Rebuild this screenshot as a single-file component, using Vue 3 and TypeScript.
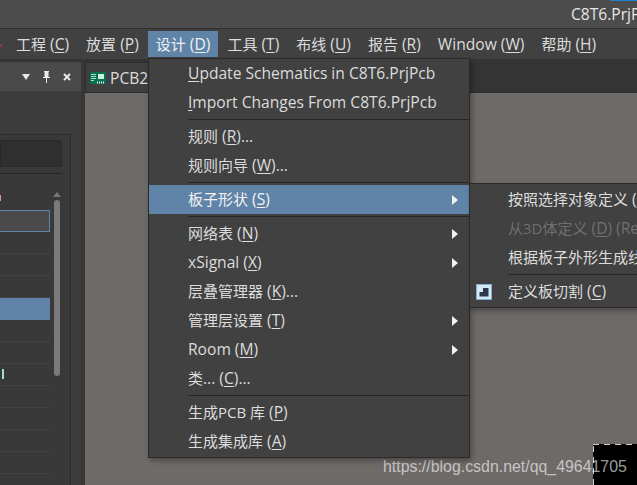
<script setup lang="ts">
interface Entry {
  cjk?: string
  lead?: string
  key?: string
  after?: string
  arrow?: boolean
  active?: boolean
  disabled?: boolean
  icon?: boolean
  sep?: boolean
}

const topMenus: Entry[] = [
  { cjk: '工程', lead: ' (', key: 'C', after: ')' },
  { cjk: '放置', lead: ' (', key: 'P', after: ')' },
  { cjk: '设计', lead: ' (', key: 'D', after: ')', active: true },
  { cjk: '工具', lead: ' (', key: 'T', after: ')' },
  { cjk: '布线', lead: ' (', key: 'U', after: ')' },
  { cjk: '报告', lead: ' (', key: 'R', after: ')' },
  { lead: 'Window (', key: 'W', after: ')' },
  { cjk: '帮助', lead: ' (', key: 'H', after: ')' },
]

const designMenu: Entry[] = [
  { key: 'U', after: 'pdate Schematics in C8T6.PrjPcb' },
  { key: 'I', after: 'mport Changes From C8T6.PrjPcb' },
  { sep: true },
  { cjk: '规则', lead: ' (', key: 'R', after: ')...' },
  { cjk: '规则向导', lead: ' (', key: 'W', after: ')...' },
  { sep: true },
  { cjk: '板子形状', lead: ' (', key: 'S', after: ')', arrow: true, active: true },
  { sep: true },
  { cjk: '网络表', lead: ' (', key: 'N', after: ')', arrow: true },
  { lead: 'xSignal (', key: 'X', after: ')', arrow: true },
  { cjk: '层叠管理器', lead: ' (', key: 'K', after: ')...' },
  { cjk: '管理层设置', lead: ' (', key: 'T', after: ')', arrow: true },
  { lead: 'Room (', key: 'M', after: ')', arrow: true },
  { cjk: '类', lead: '... (', key: 'C', after: ')...' },
  { sep: true },
  { cjk: '生成PCB 库', lead: ' (', key: 'P', after: ')' },
  { cjk: '生成集成库', lead: ' (', key: 'A', after: ')' },
]

const shapeMenu: Entry[] = [
  { cjk: '按照选择对象定义', lead: ' (', key: 'D', after: ')' },
  { cjk: '从3D体定义', lead: ' (', key: 'D', after: ') (Requires 3D mode)', disabled: true },
  { cjk: '根据板子外形生成线条', lead: ' (', key: 'L', after: ')' },
  { sep: true },
  { cjk: '定义板切割', lead: ' (', key: 'C', after: ')', icon: true },
]

const panelRows = ['selected', '', '', '', 'active', '', '', 'green', '', '', '', '']
</script>

<template>
  <div class="app">
    <header class="titlebar">
      <span class="titlebar__accent" />
      <span class="lat">C8T6.PrjPcb</span>
    </header>

    <nav class="menubar">
      <span class="menubar__speck" />
      <span
        v-for="menu in topMenus"
        :key="menu.key"
        class="menubar__item"
        :class="{ 'menubar__item--active': menu.active }"
      >{{ menu.cjk }}<span class="lat">{{ menu.lead }}<u>{{ menu.key }}</u>{{ menu.after }}</span></span>
    </nav>

    <div class="workspace">
      <aside class="panel">
        <div class="panel__head">
          <svg class="panel__tool" width="10" height="10" viewBox="0 0 10 10"><path d="M0 2h8L4 8z" fill="#e8e8e8" /></svg>
          <svg class="panel__tool" width="10" height="12" viewBox="0 0 10 12"><path d="M2 0h5v1h-.5v5H8v1H5v5H4V7H1V6h1.500V1H2z" fill="#eee" /></svg>
          <svg class="panel__tool" width="10" height="10" viewBox="0 0 10 10"><path d="M2 2l6 6M8 2L2 8" stroke="#e8e8e8" stroke-width="2" /></svg>
        </div>
        <div class="panel__body">
          <div class="frame">
            <div class="frame__search" />
            <div class="frame__rule" />
            <div class="frame__list">
              <div class="rows">
                <span class="rows__tick" />
                <div
                  v-for="(row, i) in panelRows"
                  :key="i"
                  class="rows__row"
                  :class="row && `rows__row--${row}`"
                />
              </div>
              <div class="scroll">
                <svg width="8" height="5" viewBox="0 0 8 5"><path d="M0 5h8L4 0z" fill="#777" /></svg>
                <div class="scroll__thumb" />
              </div>
            </div>
          </div>
        </div>
      </aside>

      <main class="editor">
        <div class="tabs">
          <div class="tab">
            <svg width="16" height="12" viewBox="0 0 16 12">
              <rect width="16" height="12" fill="#0b7050" />
              <path d="M1 2.500h5M1 4.500h5M1 6.500h5M1 8.500h3" stroke="#a9e0c8" stroke-width="1" />
              <rect x="8" y="2" width="6" height="5" fill="#cfeee0" />
              <path d="M7 10.500h8" stroke="#f0f0f0" stroke-width="2" stroke-dasharray="1 1" />
            </svg>
            <span class="lat">PCB2.PcbDoc</span>
          </div>
        </div>
        <div class="canvas">
          <div class="origin" />
          <span class="watermark">https://blog.csdn.net/qq_49641705</span>
        </div>
      </main>
    </div>

    <div class="menu menu--design">
      <template v-for="(entry, i) in designMenu" :key="i">
        <div v-if="entry.sep" class="menu__sep" />
        <div v-else class="menu__item" :class="{ 'menu__item--active': entry.active }">
          <span>{{ entry.cjk }}<span class="lat">{{ entry.lead }}<u>{{ entry.key }}</u>{{ entry.after }}</span></span>
          <svg v-if="entry.arrow" class="menu__arrow" width="6" height="10" viewBox="0 0 6 10"><path d="M0 0l6 5-6 5z" fill="#f2f2f2" /></svg>
        </div>
      </template>
    </div>

    <div class="menu menu--shape">
      <template v-for="(entry, i) in shapeMenu" :key="i">
        <div v-if="entry.sep" class="menu__sep" />
        <div v-else class="menu__item" :class="{ 'menu__item--disabled': entry.disabled }">
          <svg v-if="entry.icon" class="menu__icon" width="16" height="16" viewBox="0 0 16 16">
            <rect x="0.500" y="0.500" width="15" height="15" fill="#d8e9f6" stroke="#7fb0d8" />
            <path d="M3.500 8H7V4h5.500v8.500h-9z" fill="#2b3a48" />
          </svg>
          <span>{{ entry.cjk }}<span class="lat">{{ entry.lead }}<u>{{ entry.key }}</u>{{ entry.after }}</span></span>
        </div>
      </template>
    </div>
  </div>
</template>

<style>
html,
body {
  margin: 0;
  background: #4a4a4a;
}
</style>

<style scoped>
.app {
  position: relative;
  width: 637px;
  height: 485px;
  overflow: hidden;
  display: flex;
  flex-direction: column;
  background: #343434;
  font-family: "Open Sans", "Noto Sans CJK SC", sans-serif;
  font-size: 15px;
  color: #dcdcdc;
}
.lat {
  font-size: 15.6px;
  white-space: pre;
}
u {
  text-underline-offset: 2px;
  text-decoration-thickness: 1px;
}

.titlebar {
  position: relative;
  height: 28px;
  flex: none;
  display: flex;
  align-items: center;
  padding-left: 571px;
  background: #4c4c4c;
  border-bottom: 1px solid #2e2e2e;
  white-space: nowrap;
  color: #e6e6e6;
}
.titlebar__accent {
  position: absolute;
  top: 0;
  right: 0;
  width: 27px;
  height: 1px;
  background: #1f7fd0;
}

.menubar {
  position: relative;
  height: 30px;
  flex: none;
  display: flex;
  align-items: center;
  gap: 1px;
  padding-left: 8px;
  background: #414141;
  white-space: nowrap;
}
.menubar__speck {
  position: absolute;
  left: 0;
  top: 15px;
  width: 2px;
  height: 3px;
  background: #8a3c3c;
}
.menubar__item {
  height: 26px;
  line-height: 26px;
  padding: 0 8px;
}
.menubar__item--active {
  background: #5f84a8;
  color: #f0f0f0;
}

.workspace {
  flex: 1;
  min-height: 0;
  display: flex;
  gap: 4px;
  background: #383838;
}

.panel {
  width: 81px;
  flex: none;
  display: flex;
  flex-direction: column;
  padding-top: 3px;
  background: #343434;
}
.panel__head {
  height: 29px;
  flex: none;
  display: flex;
  align-items: center;
  justify-content: flex-end;
  gap: 10px;
  padding-right: 9px;
  background: #4a4a4a;
}
.panel__body {
  flex: 1;
  min-height: 0;
  padding: 43px 10px 0 0;
  background: #3c3c3c;
}
.frame {
  height: 100%;
  box-sizing: border-box;
  display: flex;
  flex-direction: column;
  padding: 5px 8px 0 0;
  border: 1px solid #2a2a2a;
  border-width: 1px 1px 0 0;
  background: #393939;
}
.frame__search {
  height: 27px;
  flex: none;
  box-sizing: border-box;
  background: #2f2f2f;
  border: 1px solid #292929;
  border-radius: 0 3px 3px 0;
}
.frame__rule {
  height: 1px;
  margin-top: 6px;
  flex: none;
  background: #262626;
}
.frame__list {
  flex: 1;
  display: flex;
  gap: 4px;
  padding: 15px 2px 0 0;
  min-height: 0;
}
.rows {
  position: relative;
  flex: 1;
  padding-top: 21px;
}
.rows__tick {
  position: absolute;
  left: 0;
  top: 6px;
  width: 1px;
  height: 6px;
  background: #d09a8a;
}
.rows__row {
  height: 22px;
  box-sizing: border-box;
  border-bottom: 1px solid #424242;
}
.rows__row--selected {
  background: #4a4a4a;
  border: 1px solid #5f84a8;
  border-left: 0;
}
.rows__row--active {
  background: #5f84a8;
  border: 0;
}
.rows__row--green {
  background: linear-gradient(#9fe0c0, #9fe0c0) no-repeat 2px 5px / 2px 10px;
}
.scroll {
  width: 6px;
  flex: none;
  display: flex;
  flex-direction: column;
  align-items: center;
  gap: 3px;
  margin-top: 3px;
}
.scroll svg {
  flex: none;
}
.scroll__thumb {
  width: 6px;
  height: 176px;
  flex: none;
  border-radius: 3px;
  background: #7a7a7a;
}

.editor {
  flex: 1;
  min-width: 0;
  display: flex;
  flex-direction: column;
}
.tabs {
  height: 33px;
  flex: none;
  display: flex;
  align-items: flex-end;
  background: #343434;
}
.tab {
  height: 30px;
  box-sizing: border-box;
  display: flex;
  align-items: center;
  gap: 4px;
  padding: 0 5px 0 4px;
  background: #3f3f3f;
  border: 1px solid #2c2c2c;
  border-bottom: 0;
  border-right: 0;
  white-space: nowrap;
  color: #dcdcdc;
}
.canvas {
  position: relative;
  flex: 1;
  background: #6e6a68;
  border-top: 1px solid #2c2c2c;
}
.origin {
  position: absolute;
  right: 0;
  bottom: 0;
  width: 44px;
  height: 41px;
  background:
    repeating-linear-gradient(90deg, #cfcfcf 0 6px, transparent 6px 11px) top / 100% 1px no-repeat,
    repeating-linear-gradient(0deg, #cfcfcf 0 6px, transparent 6px 11px) left / 1px 100% no-repeat,
    #000;
}
.watermark {
  position: absolute;
  left: 298px;
  bottom: 9px;
  font-family: "Liberation Sans", sans-serif;
  font-size: 15.9px;
  color: rgba(255, 255, 255, 0.62);
  white-space: nowrap;
}

.menu {
  position: absolute;
  box-sizing: border-box;
  background: #414141;
  border: 1px solid #2a2a2a;
  box-shadow: 2px 3px 5px rgba(0, 0, 0, 0.3);
}
.menu--design {
  left: 148px;
  top: 58px;
  width: 322px;
  height: 400px;
}
.menu--shape {
  left: 469px;
  top: 183px;
  width: 320px;
  height: 125px;
  padding-top: 1px;
}
.menu__item {
  position: relative;
  height: 29px;
  box-sizing: border-box;
  display: flex;
  align-items: center;
  padding: 0 0 1px 39px;
  white-space: nowrap;
}
.menu--shape .menu__item {
  padding-left: 38px;
}
.menu__item--active {
  background: #5f84a8;
  color: #f2f2f2;
}
.menu__item--disabled {
  color: #6f6f6f;
}
.menu__sep {
  height: 5px;
  box-sizing: border-box;
  margin-left: 39px;
  display: flex;
  align-items: center;
}
.menu--shape .menu__sep {
  margin-left: 38px;
}
.menu__sep::after {
  content: "";
  flex: 1;
  height: 1px;
  background: #262626;
}
.menu__arrow {
  position: absolute;
  right: 11px;
  top: 10px;
}
.menu__icon {
  position: absolute;
  left: 6px;
  top: 7px;
}
</style>
